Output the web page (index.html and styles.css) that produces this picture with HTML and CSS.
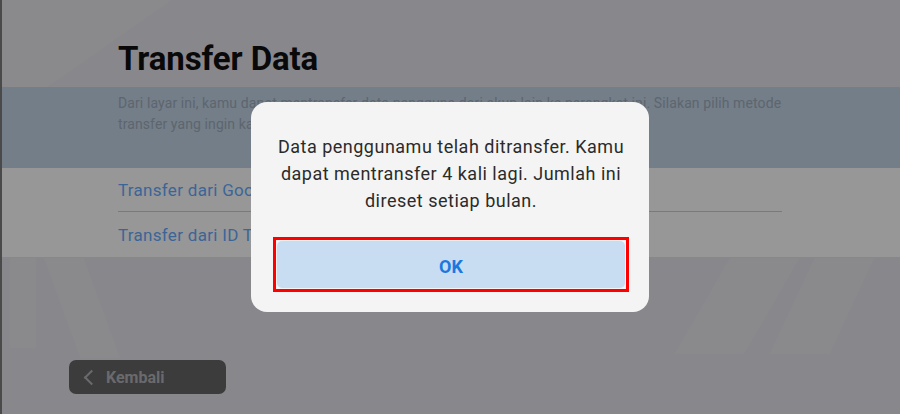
FILE: index.html
```html
<!DOCTYPE html>
<html lang="id">
<head>
  <meta charset="UTF-8" />
  <meta name="viewport" content="width=device-width, initial-scale=1.0"/>
  <title>Transfer Data</title>
  <link rel="stylesheet" href="styles.css">
</head>
<body>
  <div class="screen">
    <!-- hiasan latar -->
    <div class="deco deco-a"></div>
    <div class="deco deco-b"></div>
    <div class="deco deco-c"></div>
    <div class="deco deco-d"></div>
    <div class="deco deco-e"></div>

    <div class="head">
      <h1>Transfer Data</h1>
    </div>

    <div class="intro">
      <p>Dari layar ini, kamu dapat mentransfer data pengguna dari akun lain ke perangkat ini. Silakan pilih metode transfer yang ingin kamu gunakan.</p>
    </div>

    <ul class="methods">
      <li><a href="#">Transfer dari Google Play</a></li>
      <li><a href="#">Transfer dari ID Transfer</a></li>
    </ul>

    <div class="foot">
      <button class="back"><span class="chev"></span>Kembali</button>
    </div>
  </div>

  <!-- Dialog hasil transfer -->
  <div class="overlay">
    <div class="dialog">
      <p>Data penggunamu telah ditransfer. Kamu dapat mentransfer 4 kali lagi. Jumlah ini direset setiap bulan.</p>
      <div class="ok-frame">
        <button class="ok">OK</button>
      </div>
    </div>
  </div>
</body>
</html>
```

FILE: styles.css
```css
* { margin: 0; padding: 0; box-sizing: border-box; }
body {
  font-family: Roboto, 'Noto Sans', sans-serif;
  width: 900px; height: 414px; overflow: hidden;
  background: #d1d1d7;
}
.screen {
  position: relative;
  height: 414px;
  display: flex; flex-direction: column;
  border-left: 2px solid #727274;
  overflow: hidden;
}

/* Hiasan latar */
.deco { position: absolute; background: rgba(255,255,255,0.07); pointer-events: none; }
.deco-a { left: -60px; top: -20px; width: 180px; height: 110px; transform: skewX(-55deg); }
.deco-b { left: 8px; top: 258px; width: 26px; height: 90px; }
.deco-c { left: 60px; top: 258px; width: 40px; height: 100px; transform: skewX(20deg); }
.deco-d { left: 700px; top: 258px; width: 70px; height: 96px; transform: skewX(-30deg); }
.deco-e { left: 790px; top: 258px; width: 60px; height: 96px; transform: skewX(-25deg); }

.head { height: 87px; padding: 42px 0 0 116px; position: relative; }
.head h1 { font-size: 33px; line-height: 1; font-weight: 700; color: #0f0f0f; letter-spacing: -0.1px; }

.intro {
  height: 81px; background: #b2c2d1; padding: 6px 0 0 116px; position: relative;
}
.intro p { font-size: 14px; line-height: 21px; color: #8f9cab; max-width: 680px; letter-spacing: 0.1px; }

.methods { list-style: none; background: #e9e9e9; position: relative; padding: 0 118px 0 116px; }
.methods li { height: 44px; display: flex; align-items: center; }
.methods li:first-child { border-bottom: 1px solid #bcbcbc; }
.methods li:last-child { height: 45px; }
.methods a { color: #5c9ce8; text-decoration: none; font-size: 17px; letter-spacing: 0.3px; }

.foot { padding: 103px 0 0 67px; position: relative; }
.back {
  width: 157px; height: 34px; border: none; border-radius: 7px;
  background: #5c5c5f; color: #a3a3a6;
  font-family: inherit; font-size: 16px; font-weight: 700;
  display: flex; align-items: center; padding-left: 14px; gap: 9px;
}
.chev {
  width: 11px; height: 11px;
  border-left: 2px solid #a3a3a6; border-bottom: 2px solid #a3a3a6;
  transform: rotate(45deg); margin-left: 3px;
}

/* Overlay dialog */
.overlay {
  position: fixed; top: 0; left: 0; right: 0; bottom: 0;
  background: rgba(0, 0, 0, 0.35);
  display: flex; justify-content: center; align-items: center;
}
.dialog {
  width: 398px; height: 210px; background: #f4f4f4;
  border-radius: 16px; padding: 31px 20px 20px 22px;
  display: flex; flex-direction: column;
}
.dialog p {
  font-size: 18px; line-height: 27px; color: #2b2b2b; text-align: center;
  letter-spacing: 0.5px; padding: 0 4px;
}
.ok-frame {
  margin-top: 23px;
  border: 3px solid #ff0000; padding: 1px;
}
.ok {
  display: block; height: 47px; width: 100%;
  border: none; border-radius: 5px; padding-top: 3px;
  background: #c8ddf2; color: #1b78df;
  font-family: inherit; font-size: 18px; font-weight: 700;
}
```
